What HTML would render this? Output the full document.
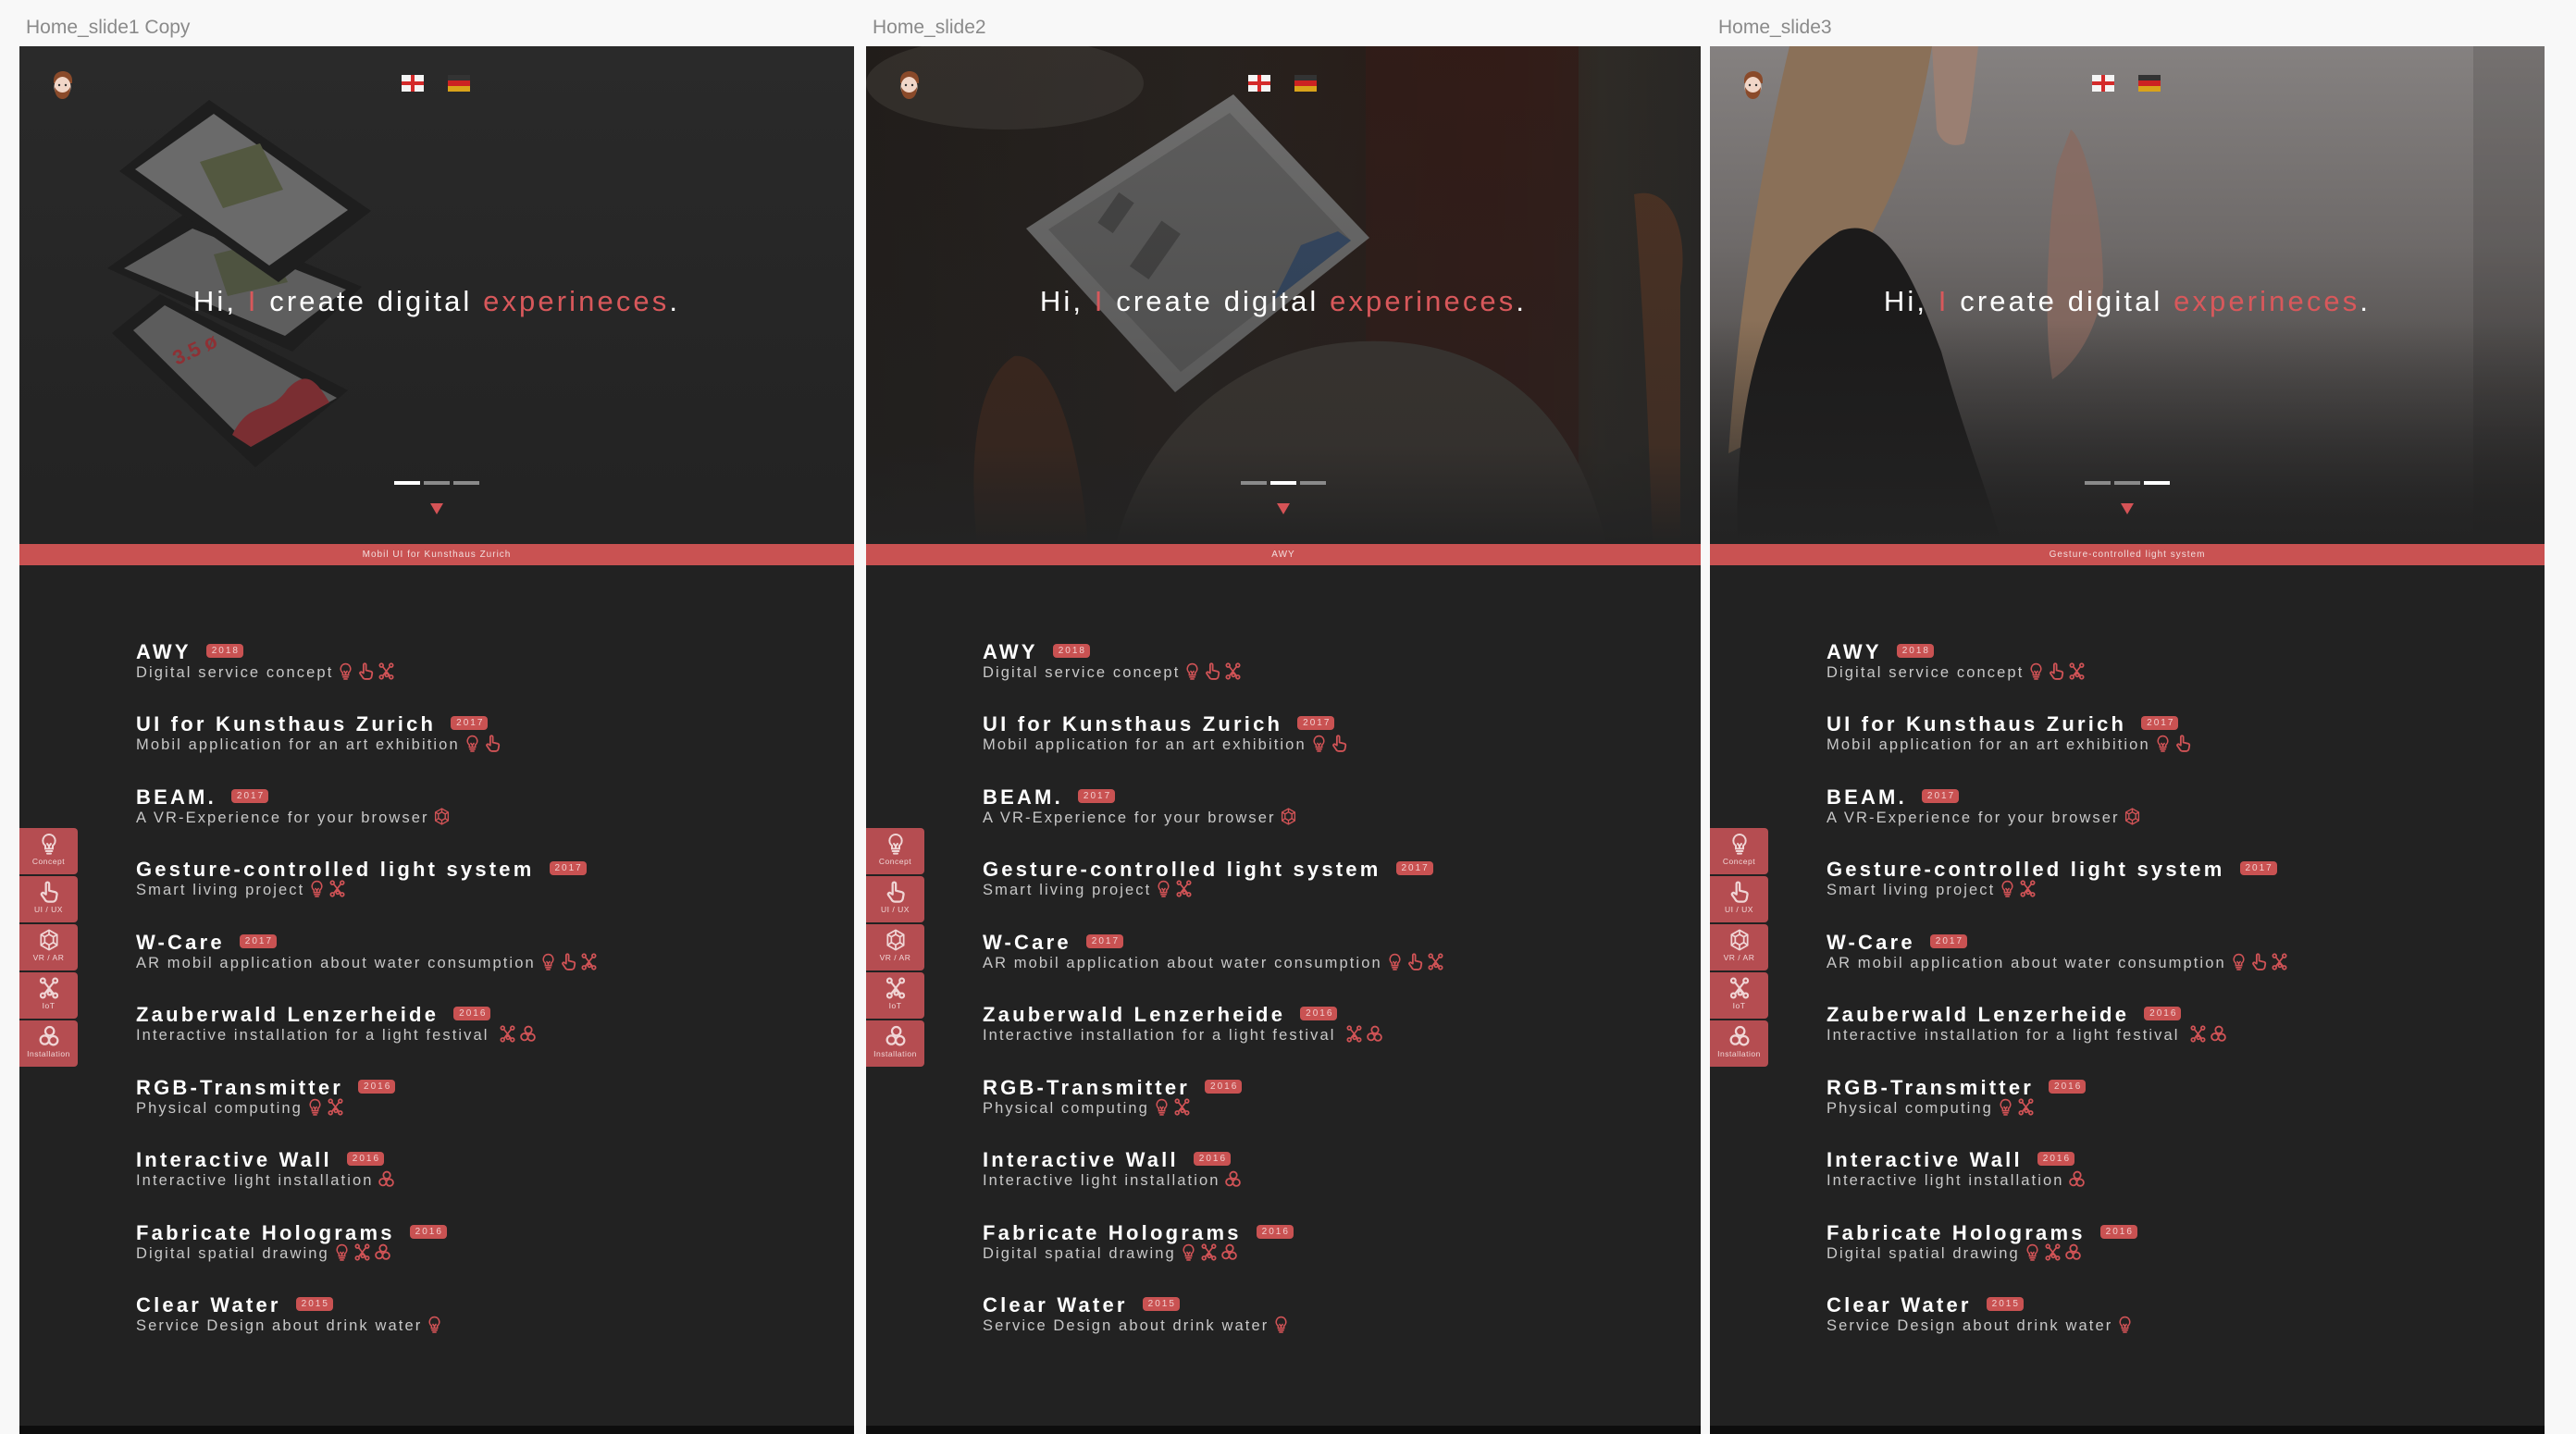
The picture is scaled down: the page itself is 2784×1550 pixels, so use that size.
<!DOCTYPE html>
<html><head><meta charset="utf-8">
<style>
*{margin:0;padding:0;box-sizing:border-box}
body{width:2784px;height:1550px;background:#f8f8f8;position:relative;overflow:hidden;font-family:"Liberation Sans",sans-serif}
.lbl{position:absolute;top:18px;font-size:21px;color:#8a8a8a}
.panel{position:absolute;top:50px;width:902px;height:1500px;background:#222222;overflow:hidden}
.panel .bot{position:absolute;left:0;right:0;bottom:0;height:9px;background:#0d0d0d}
.hero{position:absolute;left:0;top:0;width:902px;height:538px;overflow:hidden}
.bar{position:absolute;left:0;top:538px;width:902px;height:23px;background:#c95252;color:#f3dede;font-size:10px;letter-spacing:1px;text-align:center;line-height:23px}
.hi{position:absolute;left:0;width:902px;top:258px;text-align:center;font-size:31px;letter-spacing:3.1px;color:#fff}
.hi .r{color:#d8585b}
.avatar{position:absolute;left:35px;top:27px;width:23px;height:31px}
.flag{position:absolute;top:31px;width:24px;height:18px}
.dash{position:absolute;top:470px;width:28px;height:4px;background:#8a8a8a}
.dash.on{background:#fff}
.tri{position:absolute;left:444px;top:494px;width:0;height:0;border-left:7px solid transparent;border-right:7px solid transparent;border-top:12px solid #d55356}
.it{position:absolute;left:126px}
.t{font-size:22px;font-weight:bold;letter-spacing:3.2px;color:#fff;white-space:nowrap;height:26px;line-height:26px}
.b{display:inline-block;vertical-align:6px;margin-left:16px;background:#c95252;color:#f2d0d0;font-size:10px;font-weight:normal;letter-spacing:2px;border-radius:4px;height:15px;line-height:15px;padding:0 4px 0 6px}
.s{font-size:16.5px;letter-spacing:2.1px;color:#c8c8c8;white-space:nowrap;line-height:22px;margin-top:-2px}
.s svg{width:17px;height:19px;vertical-align:-3px;margin-left:5px}
.tabs{position:absolute;left:0;top:845px}
.tab{width:63px;height:50px;margin-bottom:2px;background:#b54d51;border-radius:0 4px 4px 0;color:#f0d6d6;text-align:center;font-size:8.5px;letter-spacing:.5px;padding-top:5px}
.tab svg{width:22px;height:24px;display:block;margin:0 auto 2px}
</style></head><body>
<svg width="0" height="0" style="position:absolute">
<defs>
<symbol id="bulb" viewBox="0 0 16 18"><path d="M8 1.5a5 5 0 0 0-3 9v2.5h6v-2.5a5 5 0 0 0-3-9zM5.5 15h5M6.5 17h3M6.5 9l1.5 2 1.5-2M8 11v2" fill="none" stroke="currentColor" stroke-width="1.5" stroke-linecap="round"/></symbol>
<symbol id="hand" viewBox="0 0 16 18"><path d="M5.5 11V2.5a1.3 1.3 0 0 1 2.6 0V8l5 1.2c.9.3 1.4 1 1.3 2l-.6 3.3a3 3 0 0 1-3 2.5H7.5A3.5 3.5 0 0 1 4.5 15L2 11.5a1.2 1.2 0 0 1 1.8-1.5z" fill="none" stroke="currentColor" stroke-width="1.7" stroke-linejoin="round"/></symbol>
<symbol id="iot" viewBox="0 0 16 18"><g fill="none" stroke="currentColor" stroke-width="1.6"><circle cx="3" cy="3" r="1.8"/><circle cx="13" cy="3" r="1.8"/><circle cx="3" cy="15" r="1.8"/><circle cx="13" cy="15" r="1.8"/><circle cx="8.5" cy="13" r="1.6"/><path d="M4.3 4.3l7.4 9.4M11.7 4.3l-7.4 9.4M8 9l.5 2.4"/></g></symbol>
<symbol id="cube" viewBox="0 0 16 18"><g fill="none" stroke="currentColor" stroke-width="1.3" stroke-linejoin="round"><path d="M8 1l6.5 3.7v8.6L8 17l-6.5-3.7V4.7z"/><path d="M8 4.5l3.5 2v4.5L8 13l-3.5-2V6.5zM8 1v3.5M14.5 4.7l-3 1.8M1.5 4.7l3 1.8M8 13v4M11.5 11l3 2.3M4.5 11l-3 2.3"/></g></symbol>
<symbol id="inst" viewBox="0 0 16 18"><g fill="none" stroke="currentColor" stroke-width="1.7"><circle cx="8.5" cy="5" r="3.5"/><circle cx="4.5" cy="12" r="3.5"/><circle cx="11.5" cy="12.5" r="3.5"/></g></symbol>
<symbol id="ava" viewBox="0 0 23 31"><path d="M2 10C2 3 7 0 12 0s10 3 10 10v3H2z" fill="#8a4a2a"/><ellipse cx="11.5" cy="17" rx="9" ry="11" fill="#f1d6c8"/><path d="M3 17c0 9 4 13 8.5 13S20 26 20 17c-2 4-5 6-8.5 6S5 21 3 17z" fill="#8a4a2a"/><circle cx="8" cy="15" r="1.2" fill="#333"/><circle cx="15" cy="15" r="1.2" fill="#333"/></symbol>
<symbol id="eng" viewBox="0 0 24 18"><rect width="24" height="18" fill="#f4f4f4"/><rect x="10" width="4" height="18" fill="#d42a2a"/><rect y="7" width="24" height="4" fill="#d42a2a"/></symbol>
<symbol id="ger" viewBox="0 0 24 18"><rect width="24" height="6" fill="#333"/><rect y="6" width="24" height="6" fill="#c22"/><rect y="12" width="24" height="6" fill="#d9a31a"/></symbol>
</defs></svg>

<div class="lbl" style="left:28px">Home_slide1 Copy</div>
<div class="lbl" style="left:943px">Home_slide2</div>
<div class="lbl" style="left:1857px">Home_slide3</div>

<!-- PANEL 1 -->
<div class="panel" style="left:21px">
 <div class="hero" style="background:linear-gradient(180deg,#2a2a2a,#232323 90%)">
  <svg width="902" height="538" style="position:absolute;left:0;top:0">
   <polygon points="152,268 355,372 255,455 100,310" fill="#1e1e1e"/>
   <polygon points="157,280 343,380 250,433 123,307" fill="#5c5c5c"/>
   <path d="M230 420 C250 380 270 400 290 370 C310 350 320 360 335 385 L250 433Z" fill="#7a2e32"/>
   <text x="170" y="345" font-size="22" font-weight="bold" fill="#8e3034" transform="rotate(-25 170 345)" font-family="Liberation Sans">3.5 ø</text>
   <polygon points="180,180 370,260 295,330 95,240" fill="#1e1e1e"/>
   <polygon points="187,197 353,263 287,313 113,240" fill="#5e5e5e"/>
   <polygon points="210,225 270,210 290,255 225,270" fill="#4e5340"/>
   <polygon points="205,58 380,178 280,255 108,135" fill="#1e1e1e"/>
   <polygon points="210,73 355,177 270,237 125,133" fill="#6a6a6a"/>
   <polygon points="195,125 260,105 285,155 220,175" fill="#535840"/>
  </svg>
 </div>
 <svg class="avatar"><use href="#ava"/></svg>
 <svg class="flag" style="left:413px"><use href="#eng"/></svg>
 <svg class="flag" style="left:463px"><use href="#ger"/></svg>
 <div class="hi">Hi, <span class="r">I</span> create digital <span class="r">experineces</span>.</div>
 <div class="dash on" style="left:405px"></div><div class="dash" style="left:437px"></div><div class="dash" style="left:469px"></div>
 <div class="tri"></div>
 <div class="bar">Mobil UI for Kunsthaus Zurich</div>
 <div class="it" style="top:642px"><div class="t">AWY<span class="b">2018</span></div><div class="s">Digital service concept<svg style="color:#d15356"><use href="#bulb"/></svg><svg style="color:#d15356"><use href="#hand"/></svg><svg style="color:#d15356"><use href="#iot"/></svg></div></div>
 <div class="it" style="top:720px"><div class="t">UI for Kunsthaus Zurich<span class="b">2017</span></div><div class="s">Mobil application for an art exhibition<svg style="color:#d15356"><use href="#bulb"/></svg><svg style="color:#d15356"><use href="#hand"/></svg></div></div>
 <div class="it" style="top:799px"><div class="t">BEAM.<span class="b">2017</span></div><div class="s">A VR-Experience for your browser<svg style="color:#d15356"><use href="#cube"/></svg></div></div>
 <div class="it" style="top:877px"><div class="t">Gesture-controlled light system<span class="b">2017</span></div><div class="s">Smart living project<svg style="color:#d15356"><use href="#bulb"/></svg><svg style="color:#d15356"><use href="#iot"/></svg></div></div>
 <div class="it" style="top:956px"><div class="t">W-Care<span class="b">2017</span></div><div class="s">AR mobil application about water consumption<svg style="color:#d15356"><use href="#bulb"/></svg><svg style="color:#d15356"><use href="#hand"/></svg><svg style="color:#d15356"><use href="#iot"/></svg></div></div>
 <div class="it" style="top:1034px"><div class="t">Zauberwald Lenzerheide<span class="b">2016</span></div><div class="s">Interactive installation for a light festival <svg style="color:#d15356"><use href="#iot"/></svg><svg style="color:#d15356"><use href="#inst"/></svg></div></div>
 <div class="it" style="top:1113px"><div class="t">RGB-Transmitter<span class="b">2016</span></div><div class="s">Physical computing<svg style="color:#d15356"><use href="#bulb"/></svg><svg style="color:#d15356"><use href="#iot"/></svg></div></div>
 <div class="it" style="top:1191px"><div class="t">Interactive Wall<span class="b">2016</span></div><div class="s">Interactive light installation<svg style="color:#d15356"><use href="#inst"/></svg></div></div>
 <div class="it" style="top:1270px"><div class="t">Fabricate Holograms<span class="b">2016</span></div><div class="s">Digital spatial drawing<svg style="color:#d15356"><use href="#bulb"/></svg><svg style="color:#d15356"><use href="#iot"/></svg><svg style="color:#d15356"><use href="#inst"/></svg></div></div>
 <div class="it" style="top:1348px"><div class="t">Clear Water<span class="b">2015</span></div><div class="s">Service Design about drink water<svg style="color:#d15356"><use href="#bulb"/></svg></div></div>
 <div class="tabs">
  <div class="tab"><svg><use href="#bulb"/></svg>Concept</div>
  <div class="tab"><svg><use href="#hand"/></svg>UI / UX</div>
  <div class="tab"><svg><use href="#cube"/></svg>VR / AR</div>
  <div class="tab"><svg><use href="#iot"/></svg>IoT</div>
  <div class="tab"><svg><use href="#inst"/></svg>Installation</div>
 </div>
 <div class="bot"></div>
</div>

<!-- PANEL 2 -->
<div class="panel" style="left:936px">
 <div class="hero" style="background:linear-gradient(90deg,#221d1a,#2a2420 40%,#2c1f1a 60%,#3a1c16 75%,#34302a 88%,#2c2a28)">
  <svg width="902" height="538" style="position:absolute;left:0;top:0">
   <rect x="540" y="0" width="230" height="538" fill="#3a1c17" opacity=".8"/>
   <ellipse cx="150" cy="40" rx="150" ry="50" fill="#4a4540" opacity=".6"/>
   <path d="M830 160 C870 150 890 200 880 260 L880 538 L850 538 C845 400 840 280 830 160Z" fill="#5e3a26"/>
   <path d="M270 538 C300 420 400 330 520 320 C640 310 760 360 800 538Z" fill="#47403a"/>
   <path d="M120 538 C110 440 120 360 160 335 C200 330 230 420 240 538Z" fill="#4a2a1c"/>
   <polygon points="397,52 544,207 334,374 173,197" fill="#8c8c8c"/>
   <polygon points="393,72 524,210 340,352 197,198" fill="#767676"/>
   <polygon points="470,215 510,200 524,210 440,275" fill="#3e5a80"/>
   <rect x="260" y="160" width="20" height="40" fill="#555" transform="rotate(35 270 180)"/>
   <rect x="300" y="190" width="25" height="60" fill="#555" transform="rotate(35 312 220)"/>
  </svg>
  <div style="position:absolute;inset:0;background:linear-gradient(180deg,rgba(30,28,26,.25),rgba(34,34,34,.5) 80%,#232323)"></div>
 </div>
 <svg class="avatar"><use href="#ava"/></svg>
 <svg class="flag" style="left:413px"><use href="#eng"/></svg>
 <svg class="flag" style="left:463px"><use href="#ger"/></svg>
 <div class="hi">Hi, <span class="r">I</span> create digital <span class="r">experineces</span>.</div>
 <div class="dash" style="left:405px"></div><div class="dash on" style="left:437px"></div><div class="dash" style="left:469px"></div>
 <div class="tri"></div>
 <div class="bar">AWY</div>
 <div class="it" style="top:642px"><div class="t">AWY<span class="b">2018</span></div><div class="s">Digital service concept<svg style="color:#d15356"><use href="#bulb"/></svg><svg style="color:#d15356"><use href="#hand"/></svg><svg style="color:#d15356"><use href="#iot"/></svg></div></div>
 <div class="it" style="top:720px"><div class="t">UI for Kunsthaus Zurich<span class="b">2017</span></div><div class="s">Mobil application for an art exhibition<svg style="color:#d15356"><use href="#bulb"/></svg><svg style="color:#d15356"><use href="#hand"/></svg></div></div>
 <div class="it" style="top:799px"><div class="t">BEAM.<span class="b">2017</span></div><div class="s">A VR-Experience for your browser<svg style="color:#d15356"><use href="#cube"/></svg></div></div>
 <div class="it" style="top:877px"><div class="t">Gesture-controlled light system<span class="b">2017</span></div><div class="s">Smart living project<svg style="color:#d15356"><use href="#bulb"/></svg><svg style="color:#d15356"><use href="#iot"/></svg></div></div>
 <div class="it" style="top:956px"><div class="t">W-Care<span class="b">2017</span></div><div class="s">AR mobil application about water consumption<svg style="color:#d15356"><use href="#bulb"/></svg><svg style="color:#d15356"><use href="#hand"/></svg><svg style="color:#d15356"><use href="#iot"/></svg></div></div>
 <div class="it" style="top:1034px"><div class="t">Zauberwald Lenzerheide<span class="b">2016</span></div><div class="s">Interactive installation for a light festival <svg style="color:#d15356"><use href="#iot"/></svg><svg style="color:#d15356"><use href="#inst"/></svg></div></div>
 <div class="it" style="top:1113px"><div class="t">RGB-Transmitter<span class="b">2016</span></div><div class="s">Physical computing<svg style="color:#d15356"><use href="#bulb"/></svg><svg style="color:#d15356"><use href="#iot"/></svg></div></div>
 <div class="it" style="top:1191px"><div class="t">Interactive Wall<span class="b">2016</span></div><div class="s">Interactive light installation<svg style="color:#d15356"><use href="#inst"/></svg></div></div>
 <div class="it" style="top:1270px"><div class="t">Fabricate Holograms<span class="b">2016</span></div><div class="s">Digital spatial drawing<svg style="color:#d15356"><use href="#bulb"/></svg><svg style="color:#d15356"><use href="#iot"/></svg><svg style="color:#d15356"><use href="#inst"/></svg></div></div>
 <div class="it" style="top:1348px"><div class="t">Clear Water<span class="b">2015</span></div><div class="s">Service Design about drink water<svg style="color:#d15356"><use href="#bulb"/></svg></div></div>
 <div class="tabs">
  <div class="tab"><svg><use href="#bulb"/></svg>Concept</div>
  <div class="tab"><svg><use href="#hand"/></svg>UI / UX</div>
  <div class="tab"><svg><use href="#cube"/></svg>VR / AR</div>
  <div class="tab"><svg><use href="#iot"/></svg>IoT</div>
  <div class="tab"><svg><use href="#inst"/></svg>Installation</div>
 </div>
 <div class="bot"></div>
</div>

<!-- PANEL 3 -->
<div class="panel" style="left:1848px">
 <div class="hero" style="background:linear-gradient(180deg,#858180 0%,#6e6a69 40%,#4a4746 75%,#262525 100%)">
  <svg width="902" height="538" style="position:absolute;left:0;top:0">
   <rect x="825" y="0" width="77" height="538" fill="#000" opacity=".12"/>
   <path d="M240 0 L290 0 C285 40 282 80 275 105 C262 110 250 105 245 90Z" fill="#9a7f72"/>
   <path d="M86 0 L240 0 C230 60 215 120 200 150 C180 200 120 300 60 420 L20 440 C30 300 50 150 86 0Z" fill="#8a7058"/>
   <path d="M30 538 C25 380 60 250 140 200 C190 180 220 250 250 330 C275 420 300 480 315 538Z" fill="#1c1b1b"/>
   <path d="M390 90 C405 100 425 180 425 260 C420 300 400 340 370 360 C360 300 365 200 375 130Z" fill="#8a6a60" opacity=".8"/>
  </svg>
  <div style="position:absolute;inset:0;background:linear-gradient(180deg,rgba(0,0,0,0) 55%,rgba(35,35,35,.6) 85%,#232323)"></div>
 </div>
 <svg class="avatar"><use href="#ava"/></svg>
 <svg class="flag" style="left:413px"><use href="#eng"/></svg>
 <svg class="flag" style="left:463px"><use href="#ger"/></svg>
 <div class="hi">Hi, <span class="r">I</span> create digital <span class="r">experineces</span>.</div>
 <div class="dash" style="left:405px"></div><div class="dash" style="left:437px"></div><div class="dash on" style="left:469px"></div>
 <div class="tri"></div>
 <div class="bar">Gesture-controlled light system</div>
 <div class="it" style="top:642px"><div class="t">AWY<span class="b">2018</span></div><div class="s">Digital service concept<svg style="color:#d15356"><use href="#bulb"/></svg><svg style="color:#d15356"><use href="#hand"/></svg><svg style="color:#d15356"><use href="#iot"/></svg></div></div>
 <div class="it" style="top:720px"><div class="t">UI for Kunsthaus Zurich<span class="b">2017</span></div><div class="s">Mobil application for an art exhibition<svg style="color:#d15356"><use href="#bulb"/></svg><svg style="color:#d15356"><use href="#hand"/></svg></div></div>
 <div class="it" style="top:799px"><div class="t">BEAM.<span class="b">2017</span></div><div class="s">A VR-Experience for your browser<svg style="color:#d15356"><use href="#cube"/></svg></div></div>
 <div class="it" style="top:877px"><div class="t">Gesture-controlled light system<span class="b">2017</span></div><div class="s">Smart living project<svg style="color:#d15356"><use href="#bulb"/></svg><svg style="color:#d15356"><use href="#iot"/></svg></div></div>
 <div class="it" style="top:956px"><div class="t">W-Care<span class="b">2017</span></div><div class="s">AR mobil application about water consumption<svg style="color:#d15356"><use href="#bulb"/></svg><svg style="color:#d15356"><use href="#hand"/></svg><svg style="color:#d15356"><use href="#iot"/></svg></div></div>
 <div class="it" style="top:1034px"><div class="t">Zauberwald Lenzerheide<span class="b">2016</span></div><div class="s">Interactive installation for a light festival <svg style="color:#d15356"><use href="#iot"/></svg><svg style="color:#d15356"><use href="#inst"/></svg></div></div>
 <div class="it" style="top:1113px"><div class="t">RGB-Transmitter<span class="b">2016</span></div><div class="s">Physical computing<svg style="color:#d15356"><use href="#bulb"/></svg><svg style="color:#d15356"><use href="#iot"/></svg></div></div>
 <div class="it" style="top:1191px"><div class="t">Interactive Wall<span class="b">2016</span></div><div class="s">Interactive light installation<svg style="color:#d15356"><use href="#inst"/></svg></div></div>
 <div class="it" style="top:1270px"><div class="t">Fabricate Holograms<span class="b">2016</span></div><div class="s">Digital spatial drawing<svg style="color:#d15356"><use href="#bulb"/></svg><svg style="color:#d15356"><use href="#iot"/></svg><svg style="color:#d15356"><use href="#inst"/></svg></div></div>
 <div class="it" style="top:1348px"><div class="t">Clear Water<span class="b">2015</span></div><div class="s">Service Design about drink water<svg style="color:#d15356"><use href="#bulb"/></svg></div></div>
 <div class="tabs">
  <div class="tab"><svg><use href="#bulb"/></svg>Concept</div>
  <div class="tab"><svg><use href="#hand"/></svg>UI / UX</div>
  <div class="tab"><svg><use href="#cube"/></svg>VR / AR</div>
  <div class="tab"><svg><use href="#iot"/></svg>IoT</div>
  <div class="tab"><svg><use href="#inst"/></svg>Installation</div>
 </div>
 <div class="bot"></div>
</div>
</body></html>
